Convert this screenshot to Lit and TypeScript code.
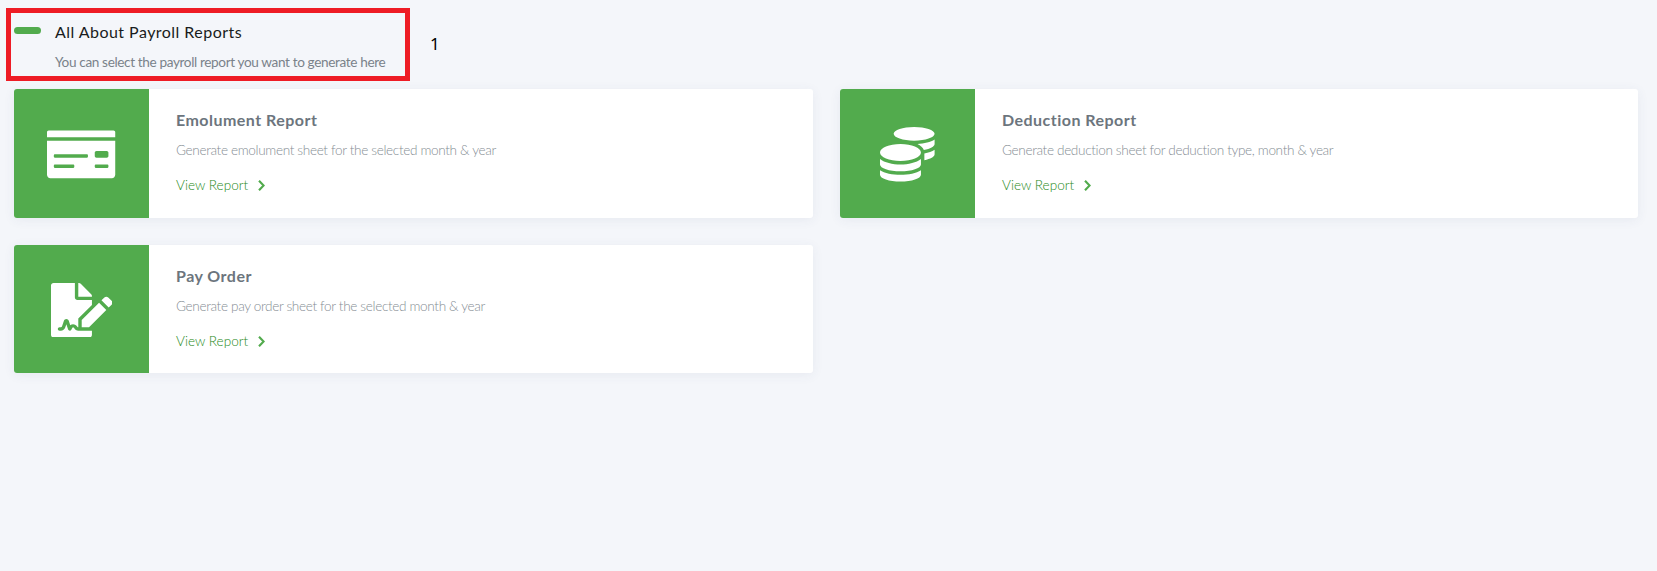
import { LitElement, html, css, svg } from "lit";
import { customElement, property } from "lit/decorators.js";

interface Report {
  title: string;
  description: string;
  icon: string;
}

const ICONS: Record<string, { width: number; path: string }> = {
  moneyCheck: {
    width: 640,
    path: "M0 448c0 17.67 14.33 32 32 32h576c17.67 0 32-14.33 32-32V128H0v320zm448-208c0-8.84 7.16-16 16-16h96c8.84 0 16 7.16 16 16v32c0 8.84-7.16 16-16 16h-96c-8.84 0-16-7.16-16-16v-32zm0 120c0-4.42 3.58-8 8-8h112c4.42 0 8 3.58 8 8v16c0 4.42-3.58 8-8 8H456c-4.42 0-8-3.58-8-8v-16zM64 264c0-4.42 3.58-8 8-8h304c4.42 0 8 3.58 8 8v16c0 4.42-3.58 8-8 8H72c-4.42 0-8-3.58-8-8v-16zm0 96c0-4.42 3.58-8 8-8h176c4.42 0 8 3.58 8 8v16c0 4.42-3.58 8-8 8H72c-4.42 0-8-3.58-8-8v-16zM624 32H16C7.16 32 0 39.16 0 48v48h640V48c0-8.84-7.16-16-16-16z",
  },
  coins: {
    width: 512,
    path: "M0 405.3V448c0 35.3 86 64 192 64s192-28.7 192-64v-42.7C342.7 434.4 267.2 448 192 448S41.3 434.4 0 405.3zM320 128c106 0 192-28.7 192-64S426 0 320 0 128 28.7 128 64s86 64 192 64zM0 300.4V352c0 35.3 86 64 192 64s192-28.7 192-64v-51.6c-41.3 34-116.9 51.6-192 51.6S41.3 334.4 0 300.4zm416 11c57.3-11.1 96-31.7 96-55.4v-42.7c-23.2 16.4-57.3 27.6-96 34.5v63.6zM192 160C86 160 0 195.8 0 240s86 80 192 80 192-35.8 192-80-86-80-192-80zm219.3 56.3c60-10.8 100.7-32 100.7-56.3v-42.7c-35.5 25.1-96.5 38.6-160.7 41.8 29.5 14.3 51.2 33.5 60 57.2z",
  },
  signature: {
    width: 576,
    path: "M218.17 424.14c-2.95-5.92-8.09-6.52-10.17-6.52s-7.22.59-10.02 6.19l-7.67 15.34c-6.37 12.78-25.03 11.37-29.48-2.09L144 386.59l-10.61 31.88c-5.89 17.66-22.38 29.53-41 29.53H80c-8.84 0-16-7.16-16-16s7.16-16 16-16h12.39c4.83 0 9.11-3.08 10.64-7.66l18.19-54.64c3.3-9.81 12.44-16.41 22.78-16.41s19.48 6.59 22.77 16.41l13.88 41.64c19.75-16.19 54.06-9.7 66 14.16 1.89 3.78 5.49 5.95 9.36 6.26v-82.12l128-127.09V160H248c-13.2 0-24-10.8-24-24V0H24C10.7 0 0 10.7 0 24v464c0 13.3 10.7 24 24 24h336c13.3 0 24-10.7 24-24v-40l-128-.11c-16.12-.31-30.58-9.28-37.83-23.75zM384 121.9c0-6.3-2.5-12.4-7-16.9L279.1 7c-4.5-4.5-10.6-7-17-7H256v128h128v-6.1zm-96 225.06V416h68.99l161.68-162.78-67.88-67.88L288 346.96zm280.54-179.63l-31.87-31.87c-9.94-9.94-26.07-9.94-36.01 0l-27.25 27.25 67.88 67.88 27.25-27.25c9.95-9.94 9.95-26.07 0-36.01z",
  },
};

const REPORTS: Report[] = [
  { title: "Emolument Report", description: "Generate emolument sheet for the selected month & year", icon: "moneyCheck" },
  { title: "Deduction Report", description: "Generate deduction sheet for deduction type, month & year", icon: "coins" },
  { title: "Pay Order", description: "Generate pay order sheet for the selected month & year", icon: "signature" },
];

@customElement("report-card")
class ReportCard extends LitElement {
  @property({ attribute: false }) report!: Report;

  static styles = css`
    :host {
      display: flex;
      background: #fff;
      border-radius: 3px;
      overflow: hidden;
      box-shadow: 0 2px 12px rgba(60, 70, 110, 0.07);
    }
    .tile {
      flex: 0 0 135px;
      display: flex;
      align-items: center;
      justify-content: center;
      background: #52ab4d;
      padding-top: 2px;
      box-sizing: border-box;
    }
    .glyph {
      height: 54.6px;
      fill: #fff;
      display: block;
    }
    .body {
      padding: 19px 27px 0;
      white-space: nowrap;
    }
    .title {
      margin: 0;
      font-size: 16px;
      line-height: 24px;
      font-weight: 700;
      letter-spacing: 0.47px;
      color: #6c757d;
    }
    .description {
      margin: 7px 0 0;
      font-size: 13.6px;
      line-height: 22px;
      font-weight: 300;
      letter-spacing: -0.35px;
      color: #868e94;
    }
    .link {
      display: flex;
      align-items: center;
      margin-top: 13px;
      font-size: 13.6px;
      line-height: 22px;
      font-weight: 300;
      color: #1f8a1a;
      text-decoration: none;
    }
    .chevron {
      width: 7px;
      height: 11px;
      margin-left: 10px;
      fill: none;
      stroke: #52ab4d;
      stroke-width: 2.1;
    }
  `;

  render() {
    const icon = ICONS[this.report.icon];
    return html`
      <div class="tile">
        <svg class="glyph" viewBox="0 0 ${icon.width} 512">${svg`<path d=${icon.path}></path>`}</svg>
      </div>
      <div class="body">
        <h5 class="title">${this.report.title}</h5>
        <p class="description">${this.report.description}</p>
        <a class="link"><span>View Report</span><svg class="chevron" viewBox="0 0 7 11"><path d="M1 0.7L5.6 5.5L1 10.3"></path></svg></a>
      </div>
    `;
  }
}

@customElement("app-root")
class AppRoot extends LitElement {
  static styles = css`
    :host {
      display: block;
      box-sizing: border-box;
      height: 571px;
      padding: 8px 19px 0 14px;
      background: #f4f6fa;
      font-family: Lato, "Open Sans", sans-serif;
    }
    .header {
      display: flex;
      height: 73px;
      margin-left: -8px;
    }
    .callout {
      display: flex;
      box-sizing: border-box;
      width: 404px;
      border: 5px solid #ee1c25;
      padding-left: 3px;
      white-space: nowrap;
    }
    .pill {
      flex: none;
      width: 27px;
      height: 7px;
      margin-top: 14px;
      border-radius: 4px;
      background: #52ab4d;
    }
    .heading {
      padding: 7px 0 0 14px;
    }
    .title {
      margin: 0;
      font-size: 16px;
      line-height: 24px;
      font-weight: 400;
      letter-spacing: 0.46px;
      color: #191c20;
    }
    .subtitle {
      margin: 7px 0 0;
      font-size: 13.6px;
      line-height: 22px;
      font-weight: 400;
      letter-spacing: -0.37px;
      color: #7a828a;
    }
    .step {
      margin: 24px 0 0 20px;
      font-family: "Noto Sans", sans-serif;
      font-size: 17px;
      line-height: 24px;
      color: #000;
    }
    .grid {
      display: grid;
      grid-template-columns: 799px 798px;
      grid-template-rows: 129px 128px;
      gap: 27px;
      margin-top: 8px;
    }
  `;

  render() {
    return html`
      <header class="header">
        <div class="callout">
          <div class="pill"></div>
          <div class="heading">
            <h4 class="title">All About Payroll Reports</h4>
            <p class="subtitle">You can select the payroll report you want to generate here</p>
          </div>
        </div>
        <div class="step">1</div>
      </header>
      <main class="grid">
        ${REPORTS.map((report) => html`<report-card .report=${report}></report-card>`)}
      </main>
    `;
  }
}
